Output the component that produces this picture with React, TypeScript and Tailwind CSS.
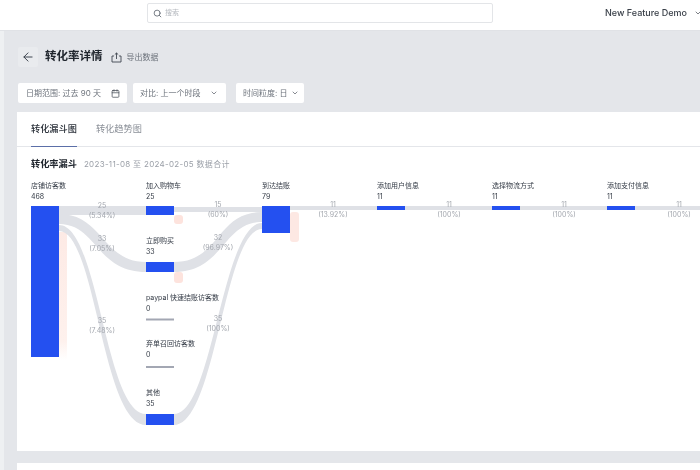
import { ArrowLeft, Calendar, ChevronDown, Search } from "lucide-react";

function NodeLabel({ className, name, value }: { className: string; name: string; value: string }) {
  return (
    <div className={`absolute leading-[11px] text-[7px] text-[#333a45] whitespace-nowrap ${className}`}>
      <div>{name}</div>
      <div>{value}</div>
    </div>
  );
}

function LinkLabel({ className, value, pct }: { className: string; value: string; pct: string }) {
  return (
    <div className={`absolute w-[50px] text-center leading-[9.5px] text-[7px] text-[#a3a7ae] whitespace-nowrap ${className}`}>
      <div>{value}</div>
      <div>{pct}</div>
    </div>
  );
}

function Funnel() {
  return (
    <div className="relative h-[271px] w-[669px] ml-[14px]">
      <svg className="absolute left-0 top-0" width="669" height="271" viewBox="31 180 669 271">
        <defs>
          <linearGradient id="fadeA" x1="0" y1="0" x2="0" y2="1">
            <stop offset="0" stopColor="#fdeae5" />
            <stop offset="0.85" stopColor="#fef1ed" />
            <stop offset="1" stopColor="#ffffff" />
          </linearGradient>
        </defs>
        <rect x="59" y="232" width="8" height="128" fill="url(#fadeA)" />
        <rect x="174" y="215" width="9" height="9" rx="3" fill="#fde3dd" />
        <rect x="174" y="272" width="9" height="11" rx="3" fill="#fde3dd" />
        <rect x="290" y="212" width="9" height="30" rx="3" fill="#fde8e3" />

        <g fill="#dfe1e6">
          <rect x="59" y="206" width="87" height="9" />
          <path d="M59 214 C 103 214, 102 262, 146 262 L146 272 C 96 272, 97 224, 59 224 Z" />
          <path d="M59 225 C 99 225, 105 414, 146 414 L146 425 C 102 425, 96 231, 59 231 Z" />
          <rect x="174" y="207" width="88" height="5" />
          <path d="M174 262 C 220 262, 216 212, 262 212 L262 222 C 222 222, 224 272, 174 272 Z" />
          <path d="M174 414 C 213 414, 222 223, 262 223 L262 229 C 224 229, 216 425, 174 425 Z" />
          <rect x="290" y="206" width="87" height="4" />
          <rect x="405" y="206" width="87" height="4" />
          <rect x="520" y="206" width="87" height="4" />
          <rect x="635" y="206" width="65" height="4" />
        </g>

        <g fill="#2450f0">
          <rect x="31" y="206" width="28" height="151" />
          <rect x="146" y="206" width="28" height="9" />
          <rect x="146" y="262" width="28" height="10" />
          <rect x="146" y="414" width="28" height="11" />
          <rect x="262" y="206" width="28" height="27" />
          <rect x="377" y="206" width="28" height="4" />
          <rect x="492" y="206" width="28" height="4" />
          <rect x="607" y="206" width="28" height="4" />
        </g>
        <rect x="146" y="318.5" width="28" height="2" fill="#a3a7b3" />
        <rect x="146" y="366" width="28" height="2" fill="#a3a7b3" />
      </svg>

      <NodeLabel className="left-0 top-0" name="店铺访客数" value="468" />
      <NodeLabel className="left-[115px] top-0" name="加入购物车" value="25" />
      <NodeLabel className="left-[115px] top-[55px]" name="立即购买" value="33" />
      <NodeLabel className="left-[115px] top-[112px]" name="paypal 快速结账访客数" value="0" />
      <NodeLabel className="left-[115px] top-[158px]" name="弃单召回访客数" value="0" />
      <NodeLabel className="left-[115px] top-[207px]" name="其他" value="35" />
      <NodeLabel className="left-[231px] top-0" name="到达结账" value="79" />
      <NodeLabel className="left-[346px] top-0" name="添加用户信息" value="11" />
      <NodeLabel className="left-[461px] top-0" name="选择物流方式" value="11" />
      <NodeLabel className="left-[576px] top-0" name="添加支付信息" value="11" />

      <LinkLabel className="left-[46px] top-[21px]" value="25" pct="(5.34%)" />
      <LinkLabel className="left-[46px] top-[54px]" value="33" pct="(7.05%)" />
      <LinkLabel className="left-[46px] top-[136px]" value="35" pct="(7.48%)" />
      <LinkLabel className="left-[162px] top-[20px]" value="15" pct="(60%)" />
      <LinkLabel className="left-[162px] top-[53px]" value="32" pct="(96.97%)" />
      <LinkLabel className="left-[162px] top-[134px]" value="35" pct="(100%)" />
      <LinkLabel className="left-[277px] top-[20px]" value="11" pct="(13.92%)" />
      <LinkLabel className="left-[393px] top-[20px]" value="11" pct="(100%)" />
      <LinkLabel className="left-[508px] top-[20px]" value="11" pct="(100%)" />
      <LinkLabel className="left-[623px] top-[20px]" value="11" pct="(100%)" />
    </div>
  );
}

export default function App() {
  return (
    <div className="h-[470px] w-[700px] overflow-hidden bg-[#e4e6ea] blur-[0.4px] font-['Inter','Noto_Sans_CJK_SC',sans-serif]">
      <header className="flex h-[31px] items-start border-b border-[#e0e2e6] bg-white pl-[147px] pt-[3px]">
        <div className="flex h-[20px] w-[346px] shrink-0 items-center rounded-[2px] border border-[#e3e5e8] pl-[5px] text-[7px] text-[#b4b8be]">
          <Search size={9} strokeWidth={2.5} className="text-[#6f757e]" />
          <span className="ml-[3px]">搜索</span>
        </div>
        <div className="ml-[112px] flex h-[20px] shrink-0 items-center gap-[7px] whitespace-nowrap text-[9px] font-medium text-[#3a4049]">
          <span>New Feature Demo</span>
          <ChevronDown size={8} />
        </div>
      </header>

      <div className="flex">
        <div className="h-[439px] w-[4px] shrink-0 bg-[#eef0f2]" />
        <main className="w-[720px] shrink-0 pl-[13px]">
          <div className="flex items-center pt-[16px]">
            <button className="ml-[1px] flex h-[20px] w-[20px] items-center justify-center rounded-[2px] bg-[#e9ebee]">
              <ArrowLeft size={14} strokeWidth={1.6} className="text-[#333a45]" />
            </button>
            <h1 className="ml-[7px] text-[11.5px] font-bold text-[#20262e]">转化率详情</h1>
            <svg className="ml-[8px]" width="11" height="11" viewBox="0 0 11 11" fill="none" stroke="#3f4650" strokeWidth="0.9">
              <path d="M3 4H1V10H10V4H8" />
              <path d="M5.5 7V1M3.8 2.6L5.5 1L7.2 2.6" />
            </svg>
            <span className="ml-[5px] text-[8px] text-[#6c727b]">导出数据</span>
          </div>

          <div className="mt-[16px] flex text-[8px] text-[#6c727b]">
            <div className="ml-[1px] flex h-[20px] w-[109px] items-center justify-between rounded-[2px] bg-white pl-[8px] pr-[7px]">
              <span>日期范围: 过去 90 天</span>
              <Calendar size={9} className="text-[#4a505a]" />
            </div>
            <div className="ml-[6px] flex h-[20px] w-[93px] items-center justify-between rounded-[2px] bg-white pl-[7px] pr-[8px]">
              <span>对比: 上一个时段</span>
              <ChevronDown size={8} className="text-[#4a505a]" />
            </div>
            <div className="ml-[10px] flex h-[20px] w-[68px] items-center justify-between rounded-[2px] bg-white pl-[7px] pr-[5px]">
              <span>时间粒度: 日</span>
              <ChevronDown size={8} className="text-[#4a505a]" />
            </div>
          </div>

          <section className="mt-[9px] h-[339px] bg-white">
            <div className="flex h-[35px] gap-[19px] border-b border-[#e4e6ea] pl-[14px]">
              <div className="-mb-px flex items-center border-b-[1.5px] border-[#5b6fa8] text-[9.2px] font-medium text-[#2b313a]">转化漏斗图</div>
              <div className="flex items-center text-[9.2px] text-[#8b9098]">转化趋势图</div>
            </div>
            <div className="flex h-[33px] items-center pl-[14px] pt-[1px]">
              <span className="text-[9.2px] font-bold text-[#20262e]">转化率漏斗</span>
              <span className="ml-[7px] text-[8px] tracking-[0.3px] text-[#9a9fa7]">2023-11-08 至 2024-02-05 数据合计</span>
            </div>
            <Funnel />
          </section>
          <div className="mt-[12px] h-[20px] bg-white" />
        </main>
      </div>
    </div>
  );
}
